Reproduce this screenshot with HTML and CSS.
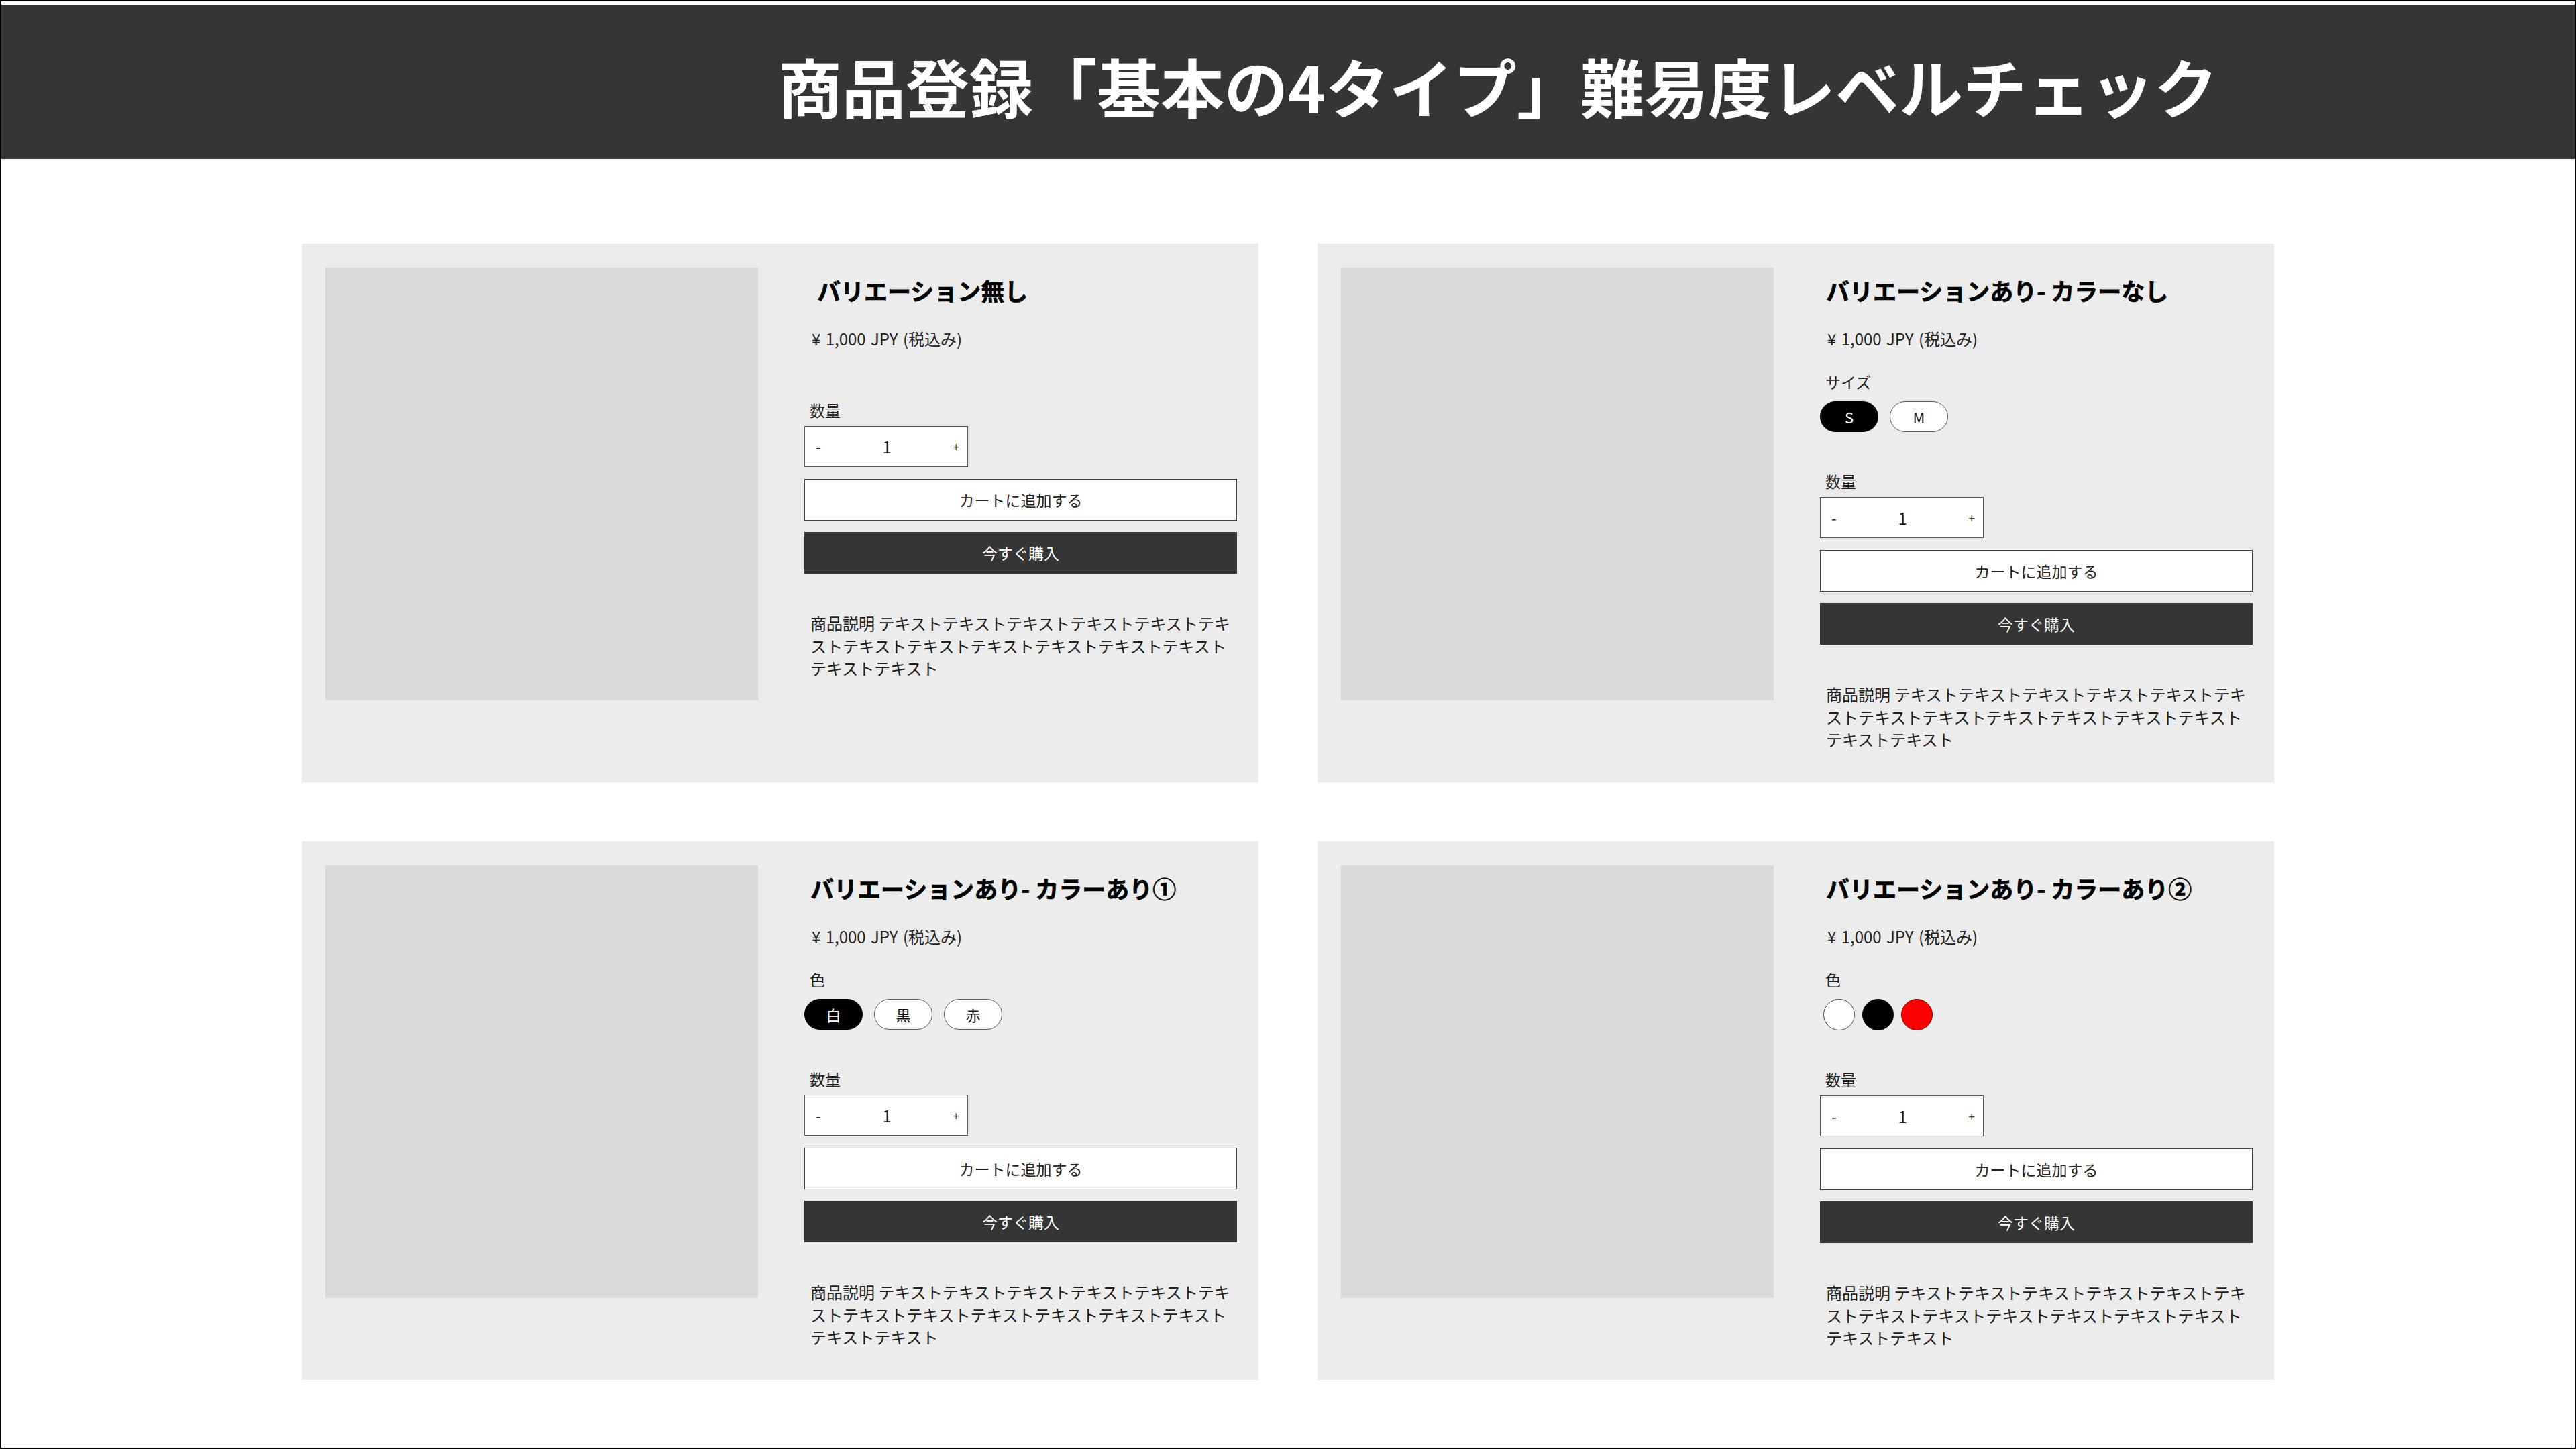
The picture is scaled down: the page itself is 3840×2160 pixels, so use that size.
FILE: index.html
```html
<!DOCTYPE html>
<html lang="ja">
<head>
    <meta charset="UTF-8">
    <meta name="viewport" content="width=device-width, initial-scale=1.0">
    <title>商品登録「基本の4タイプ」難易度レベルチェック</title>
    <link rel="stylesheet" href="styles.css">
</head>
<body>
    <div class="frame">
        <header class="page-header">
            <h1>商品登録「基本の4タイプ」難易度レベルチェック</h1>
        </header>

        <main class="product-grid">

            <!-- 1: no variation -->
            <article class="product product--simple">
                <div class="product-photo"></div>
                <div class="product-info">
                    <h2 class="product-title product-title--indent">バリエーション無し</h2>
                    <p class="product-price">¥ 1,000 JPY (税込み)</p>
                    <div class="quantity">
                        <p class="field-label">数量</p>
                        <div class="quantity-box">
                            <span class="qty-minus">-</span>
                            <span class="qty-value">1</span>
                            <span class="qty-plus">+</span>
                        </div>
                    </div>
                    <button class="btn btn-cart" type="button">カートに追加する</button>
                    <button class="btn btn-buy" type="button">今すぐ購入</button>
                    <p class="product-desc">商品説明 テキストテキストテキストテキストテキストテキストテキストテキストテキストテキストテキストテキストテキストテキスト</p>
                </div>
            </article>

            <!-- 2: size only -->
            <article class="product">
                <div class="product-photo"></div>
                <div class="product-info">
                    <h2 class="product-title">バリエーションあり- カラーなし</h2>
                    <p class="product-price">¥ 1,000 JPY (税込み)</p>
                    <div class="variant">
                        <p class="field-label">サイズ</p>
                        <div class="option-list">
                            <span class="option-pill is-selected">S</span>
                            <span class="option-pill">M</span>
                        </div>
                    </div>
                    <div class="quantity">
                        <p class="field-label">数量</p>
                        <div class="quantity-box">
                            <span class="qty-minus">-</span>
                            <span class="qty-value">1</span>
                            <span class="qty-plus">+</span>
                        </div>
                    </div>
                    <button class="btn btn-cart" type="button">カートに追加する</button>
                    <button class="btn btn-buy" type="button">今すぐ購入</button>
                    <p class="product-desc">商品説明 テキストテキストテキストテキストテキストテキストテキストテキストテキストテキストテキストテキストテキストテキスト</p>
                </div>
            </article>

            <!-- 3: colour as text buttons -->
            <article class="product">
                <div class="product-photo"></div>
                <div class="product-info">
                    <h2 class="product-title">バリエーションあり- カラーあり①</h2>
                    <p class="product-price">¥ 1,000 JPY (税込み)</p>
                    <div class="variant">
                        <p class="field-label">色</p>
                        <div class="option-list">
                            <span class="option-pill is-selected">白</span>
                            <span class="option-pill">黒</span>
                            <span class="option-pill">赤</span>
                        </div>
                    </div>
                    <div class="quantity">
                        <p class="field-label">数量</p>
                        <div class="quantity-box">
                            <span class="qty-minus">-</span>
                            <span class="qty-value">1</span>
                            <span class="qty-plus">+</span>
                        </div>
                    </div>
                    <button class="btn btn-cart" type="button">カートに追加する</button>
                    <button class="btn btn-buy" type="button">今すぐ購入</button>
                    <p class="product-desc">商品説明 テキストテキストテキストテキストテキストテキストテキストテキストテキストテキストテキストテキストテキストテキスト</p>
                </div>
            </article>

            <!-- 4: colour swatches -->
            <article class="product">
                <div class="product-photo"></div>
                <div class="product-info">
                    <h2 class="product-title">バリエーションあり- カラーあり②</h2>
                    <p class="product-price">¥ 1,000 JPY (税込み)</p>
                    <div class="variant">
                        <p class="field-label">色</p>
                        <div class="option-list swatch-list">
                            <span class="swatch swatch-white" title="白"></span>
                            <span class="swatch swatch-black" title="黒"></span>
                            <span class="swatch swatch-red" title="赤"></span>
                        </div>
                    </div>
                    <div class="quantity">
                        <p class="field-label">数量</p>
                        <div class="quantity-box">
                            <span class="qty-minus">-</span>
                            <span class="qty-value">1</span>
                            <span class="qty-plus">+</span>
                        </div>
                    </div>
                    <button class="btn btn-cart" type="button">カートに追加する</button>
                    <button class="btn btn-buy" type="button">今すぐ購入</button>
                    <p class="product-desc">商品説明 テキストテキストテキストテキストテキストテキストテキストテキストテキストテキストテキストテキストテキストテキスト</p>
                </div>
            </article>

        </main>
    </div>
</body>
</html>
```

FILE: styles.css
```css
* {
    box-sizing: border-box;
}

body {
    margin: 0;
    color: #1e1e1e;
    font-family: "Noto Sans CJK JP", "Noto Sans", sans-serif;
    background: #fff;
}

.frame {
    height: 100vh;
    border: 2px solid #000;
    padding-top: 5px;
}

.page-header {
    height: 230px;
    background: #353535;
    display: flex;
    align-items: center;
    padding: 10px 0 0 1158px;
}

.page-header h1 {
    margin: 0;
    color: #fff;
    font-size: 95px;
    font-weight: 700;
    line-height: 1;
    white-space: nowrap;
}

.product-grid {
    display: grid;
    grid-template-columns: 1426px 1426px;
    grid-auto-rows: 803px;
    justify-content: center;
    gap: 88px;
    margin-top: 126px;
}

.product {
    display: flex;
    gap: 69px;
    padding: 36px 32px 36px 35px;
    background: #ececec;
}

.product-photo {
    flex-shrink: 0;
    width: 645px;
    height: 645px;
    background: #d9d9d9;
}

.product-info {
    flex: 1;
    display: flex;
    flex-direction: column;
    padding-top: 8px;
    font-size: 23px;
    line-height: 33px;
}

.product-title {
    margin: 0;
    padding-left: 9px;
    font-size: 35px;
    line-height: 52px;
    font-weight: 700;
    color: #000;
    -webkit-text-stroke: 0.6px #000;
}

.product-title--indent {padding-left: 19px;}

.product-price {
    margin: 29px 0 0;
    padding-left: 11px;
    font-size: 24px;
    word-spacing: 2px;
    color: #222;
}

.field-label {
    margin: 0;
    padding-left: 8px;
}

.variant {
    margin-top: 32px;
}

.option-list {
    display: flex;
    gap: 17px;
    margin-top: 12px;
}

.option-pill {
    width: 87px;
    height: 46px;
    border: 1px solid #555;
    border-radius: 23px;
    background: #fff;
    display: flex;
    align-items: center;
    justify-content: center;
    font-size: 22px;
    color: #111;
}

.option-pill.is-selected {
    background: #000;
    border-color: #000;
    color: #fff;
}

.swatch-list {
    gap: 11px;
    padding-left: 5px;
}

.swatch {
    width: 47px;
    height: 47px;
    border-radius: 50%;
    border: 1px solid #444;
}

.swatch-white {background: #fff;}
.swatch-black {background: #000; border-color: #000;}
.swatch-red {background: #ff0000; border-color: #7a0000;}

.quantity {
    margin-top: 57px;
}

.product--simple .quantity {
    margin-top: 74px;
}

.quantity-box {
    width: 244px;
    height: 61px;
    margin-top: 7px;
    border: 1px solid #555;
    background: #fff;
    display: flex;
    align-items: center;
    justify-content: space-between;
    padding: 0 12px 0 16px;
}

.qty-minus {
    font-size: 22px;
    color: #222;
}

.qty-plus {
    font-size: 17px;
    color: #333;
}

.qty-value {
    font-size: 24px;
}

.btn {
    height: 62px;
    width: 100%;
    border: 1px solid #444;
    font-family: inherit;
    font-size: 23px;
    cursor: pointer;
}

.btn-cart {
    margin-top: 18px;
    background: #fff;
    color: #222;
}

.btn-buy {
    margin-top: 17px;
    background: #353535;
    border-color: #353535;
    color: #fff;
}

.product-desc {
    margin: 57px 0 0;
    padding-left: 9px;
    font-size: 24px;
    line-height: 33.5px;
}
```
